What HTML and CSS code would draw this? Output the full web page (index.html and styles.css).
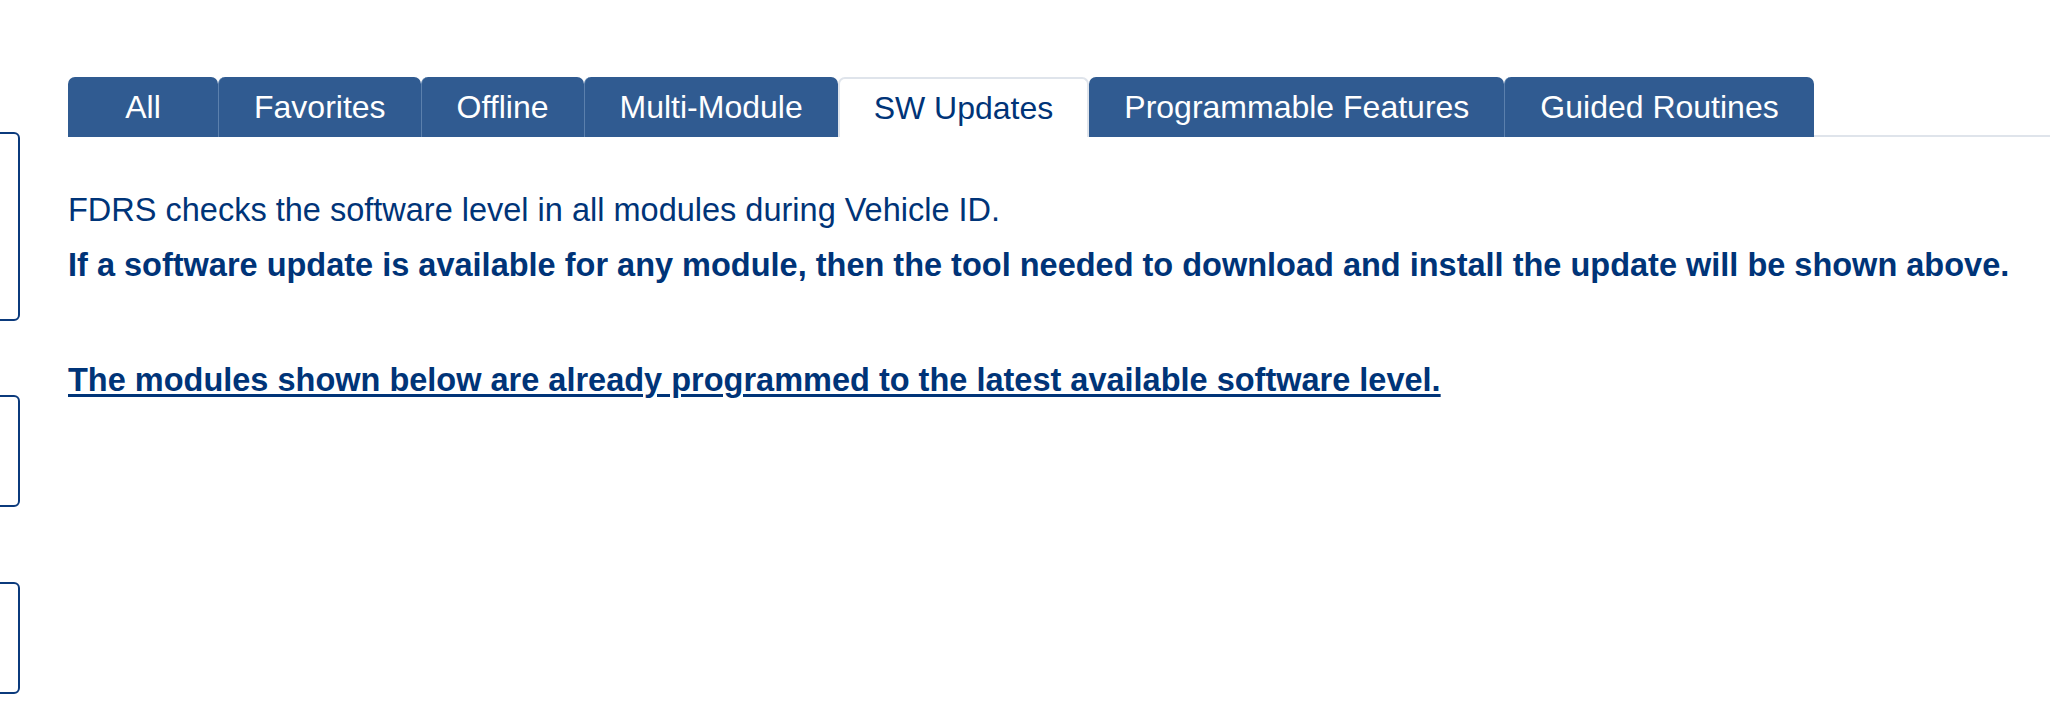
FILE: index.html
```html
<!DOCTYPE html>
<html lang="en">
<head>
<meta charset="utf-8">
<title>SW Updates</title>
<link rel="stylesheet" href="styles.css">
</head>
<body>
<div class="page">
  <aside class="side">
    <div class="side-box box-1"></div>
    <div class="side-box box-2"></div>
    <div class="side-box box-3"></div>
  </aside>
  <main class="main">
    <nav class="tabs">
      <div class="tab tab-first">All</div>
      <div class="tab">Favorites</div>
      <div class="tab">Offline</div>
      <div class="tab">Multi-Module</div>
      <div class="tab tab-active">SW Updates</div>
      <div class="tab">Programmable Features</div>
      <div class="tab tab-last">Guided Routines</div>
    </nav>
    <section class="content">
      <p class="line">FDRS checks the software level in all modules during Vehicle ID.</p>
      <p class="line line-bold">If a software update is available for any module, then the tool needed to download and install the update will be shown above.</p>
      <p class="line line-bold line-under">The modules shown below are already programmed to the latest available software level.</p>
    </section>
  </main>
</div>
</body>
</html>
```
FILE: styles.css
```css
html, body {
  margin: 0;
  padding: 0;
  background: #ffffff;
}
body {
  font-family: "Liberation Sans", Arial, sans-serif;
  color: #003478;
  overflow: hidden;
}
.page {
  display: flex;
  width: 2050px;
  height: 715px;
}
.side {
  width: 20px;
  flex: none;
  display: flex;
  flex-direction: column;
}
.side-box {
  width: 60px;
  margin-left: -40px;
  box-sizing: border-box;
  border: 2px solid #0b3a7c;
  border-radius: 6px;
}
.box-1 {
  margin-top: 132px;
  height: 189px;
}
.box-2 {
  margin-top: 74px;
  height: 112px;
}
.box-3 {
  margin-top: 75px;
  height: 112px;
}
.main {
  flex: 1;
  margin-left: 48px;
  padding-top: 77px;
}
.tabs {
  display: flex;
  height: 60px;
  box-shadow: inset 0 -2px 0 #dfe4eb;
}
.tab {
  box-sizing: border-box;
  height: 60px;
  line-height: 60px;
  padding: 0 35px;
  font-size: 32px;
  color: #ffffff;
  background: #305b91;
  border-radius: 7px 7px 0 0;
  border-left: 1px solid #5b80ad;
  text-align: center;
  white-space: nowrap;
}
.tab-first {
  min-width: 150px;
  border-left: none;
}
.tab-active {
  background: #ffffff;
  color: #003478;
  border: 2px solid #dfe4eb;
  border-bottom: none;
  line-height: 58px;
  padding: 0 34px;
}
.tab-active + .tab {
  border-left: none;
}
.content {
  padding-top: 46px;
}
.line {
  margin: 0;
  font-size: 32.5px;
  line-height: 55px;
}
.line-bold {
  font-weight: bold;
}
.line-under {
  margin-top: 60px;
  display: inline-block;
  text-decoration: underline;
  text-decoration-thickness: 3px;
  text-underline-offset: 3px;
}
```
